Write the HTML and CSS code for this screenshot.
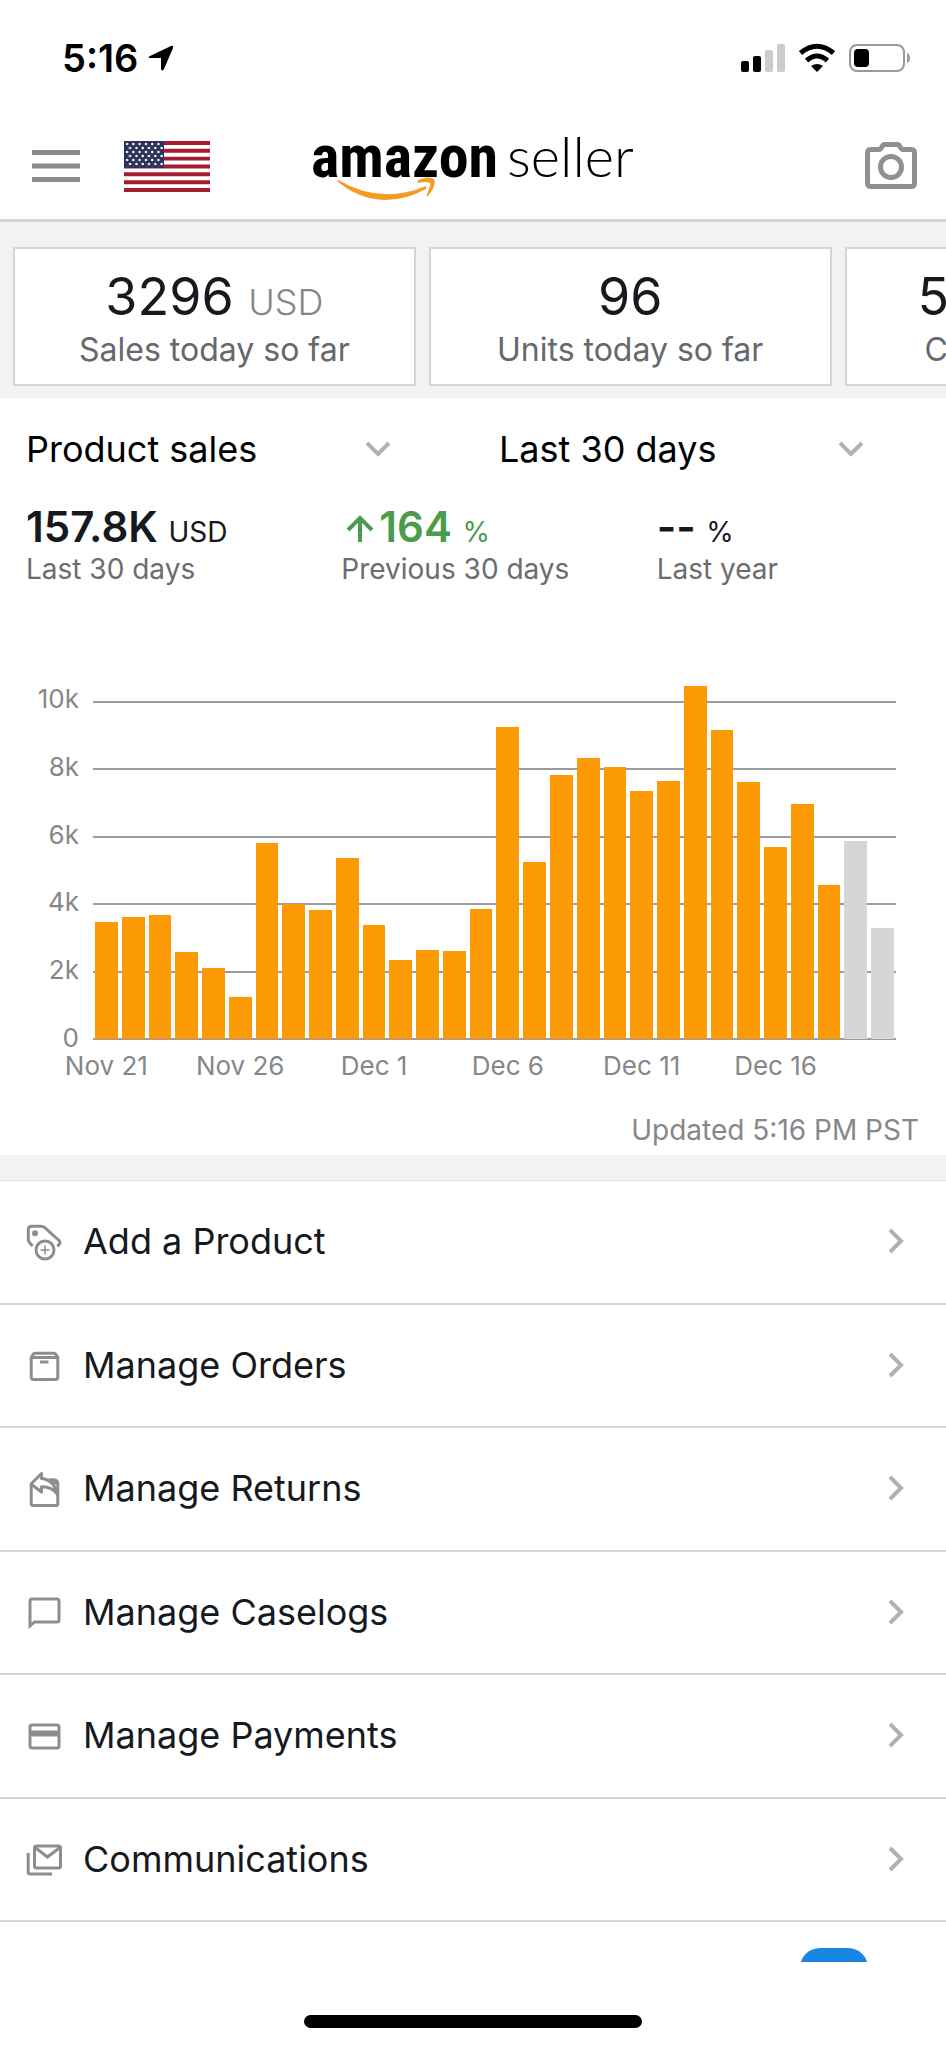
FILE: index.html
```html
<!DOCTYPE html>
<html lang="en">
<head>
  <meta charset="UTF-8">
  <meta name="viewport" content="width=device-width, initial-scale=1.0">
  <title>Amazon Seller</title>
  <link rel="stylesheet" href="styles.css">
</head>
<body>
  <div class="status-bar">
    <div class="status-time">
      <span>5:16</span>
      <svg width="26" height="26" viewBox="0 0 26 26"><path d="M2 11 L23 1 Q26 0 25 3 L16 24 Q14 27 13 24 V13 H2 Q-1 12.500 2 11Z"/></svg>
    </div>
    <div class="status-icons">
      <svg width="44" height="28" viewBox="0 0 44 28">
        <rect x="0" y="17" width="8" height="11" rx="2"/>
        <rect x="12" y="12" width="8" height="16" rx="2"/>
        <rect x="24" y="6" width="8" height="22" rx="2" fill="#ccc"/>
        <rect x="36" y="0" width="8" height="28" rx="2" fill="#ccc"/>
      </svg>
      <svg width="38" height="28" viewBox="0 0 38 28">
        <path d="M2.500 9 Q19 -4.500 35.500 9" fill="none" stroke="#000" stroke-width="5"/>
        <path d="M8.500 16.500 Q19 7.500 29.500 16.500" fill="none" stroke="#000" stroke-width="5"/>
        <path d="M13 22 Q19 18 25 22 L19 28Z"/>
      </svg>
      <svg width="62" height="28" viewBox="0 0 62 28">
        <rect x="1" y="1" width="54" height="26" rx="7" fill="none" stroke="#999" stroke-width="2"/>
        <rect x="5" y="5" width="15" height="18" rx="4"/>
        <path d="M58 9 Q61 10 61 14 T58 19Z" fill="#999"/>
      </svg>
    </div>
  </div>

  <header class="header">
    <div class="header-left">
      <button class="icon-button" aria-label="Menu">
        <svg width="48" height="32" viewBox="0 0 48 32"><path d="M0 2.500H48M0 16H48M0 29.500H48" stroke="#898b8f" stroke-width="5"/></svg>
      </button>
      <button class="icon-button" aria-label="Marketplace">
        <svg width="86" height="51" viewBox="0 0 86 51">
          <defs>
            <pattern id="stars" x="1" y="1" width="6.300" height="8" patternUnits="userSpaceOnUse">
              <circle cx="2" cy="2" r="1.200" fill="#fff"/>
              <circle cx="5.100" cy="6" r="1.200" fill="#fff"/>
            </pattern>
          </defs>
          <rect width="86" height="51" fill="#fff"/>
          <path d="M0 2H86M0 9.800H86M0 17.600H86M0 25.500H86M0 33.300H86M0 41.200H86M0 49H86" stroke="#a51c30" stroke-width="3.900"/>
          <rect width="40" height="27" fill="#2b3158"/>
          <rect x="1" y="1" width="38" height="25" fill="url(#stars)"/>
        </svg>
      </button>
    </div>
    <svg class="logo" width="328" height="74" viewBox="0 0 328 74">
      <text class="logo-amazon" x="0" y="48">amazon</text>
      <text class="logo-seller" x="196" y="48">seller</text>
      <path d="M27 51 Q70 76 115 57 Q116 58 115 60 Q95 71 74 71 Q47 70 26 52Z" fill="#f59b20"/>
      <path d="M106 52 Q116 46 123 50 Q126 56 117 67 Q115 68 116 65 Q120 56 119 54 Q116 52 107 54Z" fill="#f59b20"/>
    </svg>
    <button class="icon-button camera-button" aria-label="Camera">
      <svg width="52" height="48" viewBox="0 0 52 48" fill="none" stroke="#8e9092" stroke-width="5" stroke-linejoin="round">
        <path d="M6 7.500H13.500Q16 7.500 17 4.500Q18 2.500 20 2.500H32Q34 2.500 35 4.500Q36 7.500 38.500 7.500H46Q49.500 7.500 49.500 11V41Q49.500 44.500 46 44.500H6Q2.500 44.500 2.500 41V11Q2.500 7.500 6 7.500Z"/>
        <circle cx="26" cy="25" r="10.500"/>
      </svg>
    </button>
  </header>

  <section class="cards">
    <a class="card" href="#sales">
      <span class="card-value">3296 <small>USD</small></span>
      <span class="card-label">Sales today so far</span>
    </a>
    <a class="card" href="#units">
      <span class="card-value">96</span>
      <span class="card-label">Units today so far</span>
    </a>
    <a class="card" href="#balance">
      <span class="card-value">51.34K <small>USD</small></span>
      <span class="card-label">Current balance</span>
    </a>
  </section>

  <section class="sales">
    <div class="filters">
      <div class="filter">
        <select aria-label="Metric"><option>Product sales</option></select>
        <svg width="26" height="16" viewBox="0 0 26 16"><path d="M2 2L13 13L24 2"/></svg>
      </div>
      <div class="filter">
        <select aria-label="Date range"><option>Last 30 days</option></select>
        <svg width="26" height="16" viewBox="0 0 26 16"><path d="M2 2L13 13L24 2"/></svg>
      </div>
    </div>

    <div class="metrics">
      <div class="metric">
        <div class="metric-value">157.8K <small>USD</small></div>
        <div class="metric-label">Last 30 days</div>
      </div>
      <div class="metric">
        <div class="metric-value up"><svg width="38" height="26" viewBox="0 0 38 26"><path d="M19 26V3M7 14L19 2L31 14"/></svg>164 <small>%</small></div>
        <div class="metric-label">Previous 30 days</div>
      </div>
      <div class="metric">
        <div class="metric-value">-- <small>%</small></div>
        <div class="metric-label">Last year</div>
      </div>
    </div>

    <div class="chart">
      <div class="y-axis">
        <span>10k</span><span>8k</span><span>6k</span><span>4k</span><span>2k</span><span>0</span>
      </div>
      <div class="plot">
        <div class="grid-lines"><i></i><i></i><i></i><i></i><i></i></div>
        <div class="bars">
          <i style="height: 34.7%"></i>
          <i style="height: 36%"></i>
          <i style="height: 36.7%"></i>
          <i style="height: 25.6%"></i>
          <i style="height: 21%"></i>
          <i style="height: 12.5%"></i>
          <i style="height: 58.1%"></i>
          <i style="height: 39.9%"></i>
          <i style="height: 38.1%"></i>
          <i style="height: 53.5%"></i>
          <i style="height: 33.6%"></i>
          <i style="height: 23.3%"></i>
          <i style="height: 26.3%"></i>
          <i style="height: 25.9%"></i>
          <i style="height: 38.4%"></i>
          <i style="height: 92.3%"></i>
          <i style="height: 52.5%"></i>
          <i style="height: 78%"></i>
          <i style="height: 83%"></i>
          <i style="height: 80.6%"></i>
          <i style="height: 73.5%"></i>
          <i style="height: 76.2%"></i>
          <i style="height: 104.3%"></i>
          <i style="height: 91.5%"></i>
          <i style="height: 75.9%"></i>
          <i style="height: 56.9%"></i>
          <i style="height: 69.6%"></i>
          <i style="height: 45.5%"></i>
          <i class="pending" style="height: 58.5%"></i>
          <i class="pending" style="height: 32.9%"></i>
        </div>
      </div>
      <div class="x-axis">
        <div class="x-labels">
          <span>Nov 21</span><span>Nov 26</span><span>Dec 1</span><span>Dec 6</span><span>Dec 11</span><span>Dec 16</span>
        </div>
      </div>
    </div>
    <p class="updated">Updated 5:16 PM PST</p>
  </section>

  <nav class="menu">
    <a class="menu-item" href="#add-product">
      <svg class="menu-icon" viewBox="0 0 36 36">
        <path d="M6.500 23L3.500 19.500Q2.300 18 2.300 16.500V6.500Q2.300 3.300 5.500 3.300H15Q17 3.300 18.500 4.500L33 17.500Q34.500 19 33.500 21L31.500 23.500"/>
        <circle cx="9" cy="10.300" r="3" fill="#8b8d90" stroke="none"/>
        <circle cx="19" cy="27" r="9"/>
        <path d="M19 22.500V31.500M14.500 27H23.500" stroke-width="1.500"/>
      </svg>
      <span>Add a Product</span>
      <svg class="chevron" viewBox="0 0 16 26"><path d="M2 2L13 13L2 24"/></svg>
    </a>
    <a class="menu-item" href="#orders">
      <svg class="menu-icon" viewBox="0 0 36 36">
        <path d="M5.200 10.500V30Q5.200 32.500 7.700 32.500H29.300Q31.800 32.500 31.800 30V10.500L30 7.500Q29.300 6.200 28 6.200H9Q7.700 6.200 7 7.500ZM5.200 10.500H31.800"/>
        <path d="M14 15H22.500" stroke-width="3"/>
      </svg>
      <span>Manage Orders</span>
      <svg class="chevron" viewBox="0 0 16 26"><path d="M2 2L13 13L2 24"/></svg>
    </a>
    <a class="menu-item" href="#returns">
      <svg class="menu-icon" viewBox="0 0 36 36">
        <path d="M5.200 15V33.500Q5.200 35.500 7.200 35.500H29.800Q31.800 35.500 31.800 33.500V14Q31.800 10 28 9.700H23L31.800 14"/>
        <path d="M5 14L15.500 3.500V8.500Q28.500 10 31 24Q26 16.500 15.500 16.800V22Z" stroke-linejoin="round"/>
      </svg>
      <span>Manage Returns</span>
      <svg class="chevron" viewBox="0 0 16 26"><path d="M2 2L13 13L2 24"/></svg>
    </a>
    <a class="menu-item" href="#caselogs">
      <svg class="menu-icon" viewBox="0 0 36 36">
        <path d="M4 32V7Q4 5 6 5H31Q33 5 33 7V26Q33 28 31 28H8.500Z"/>
      </svg>
      <span>Manage Caselogs</span>
      <svg class="chevron" viewBox="0 0 16 26"><path d="M2 2L13 13L2 24"/></svg>
    </a>
    <a class="menu-item" href="#payments">
      <svg class="menu-icon" viewBox="0 0 36 36">
        <rect x="4" y="8" width="29" height="23" rx="2"/>
        <path d="M4 16.500H33" stroke-width="6"/>
      </svg>
      <span>Manage Payments</span>
      <svg class="chevron" viewBox="0 0 16 26"><path d="M2 2L13 13L2 24"/></svg>
    </a>
    <a class="menu-item" href="#communications">
      <svg class="menu-icon" viewBox="0 0 36 36">
        <rect x="8.500" y="5" width="26" height="22" rx="2"/>
        <path d="M9 6.500L21.500 16L34 6.500"/>
        <path d="M2.200 12V31Q2.200 33 4.200 33H26"/>
      </svg>
      <span>Communications</span>
      <svg class="chevron" viewBox="0 0 16 26"><path d="M2 2L13 13L2 24"/></svg>
    </a>
  </nav>

  <footer class="bottom">
    <div class="peek"><button class="chat-button" aria-label="Help"></button></div>
    <div class="home-indicator"></div>
  </footer>
</body>
</html>
```
FILE: styles.css
```css
* {
    box-sizing: border-box;
}
body {
    margin: 0;
    min-height: 100vh;
    display: flex;
    flex-direction: column;
    background-color: #fff;
    color: #16191d;
    font-family: Inter, "Liberation Sans", sans-serif;
    overflow-x: hidden;
}
svg {
    display: block;
    flex-shrink: 0;
    overflow: visible;
}
small {
    line-height: 1;
}
a {
    color: inherit;
    text-decoration: none;
}

/* status bar */
.status-bar {
    display: flex;
    justify-content: space-between;
    align-items: center;
    height: 115px;
    padding: 0 35px 0 62px;
    color: #000;
}
.status-time {
    display: flex;
    align-items: center;
    gap: 10px;
    font-size: 38px;
    font-weight: 600;
}
.status-icons {
    display: flex;
    align-items: center;
    gap: 13px;
}

/* header */
.header {
    display: grid;
    grid-template-columns: 1fr auto 1fr;
    align-items: center;
    height: 107px;
    padding: 0 29px 2px 32px;
    border-bottom: 3px solid #d3d5d7;
}
.header-left {
    display: flex;
    align-items: center;
    gap: 44px;
}
.icon-button {
    padding: 0;
    border: none;
    background: none;
    cursor: pointer;
}
.camera-button {
    justify-self: end;
}
.logo-amazon {
    font-family: "Liberation Sans Narrow", "Roboto Condensed", Lato, sans-serif;
    font-size: 60px;
    font-weight: 700;
}
.logo-seller {
    font-family: Lato, sans-serif;
    font-size: 56px;
    font-weight: 300;
}

/* cards */
.cards {
    display: flex;
    gap: 13px;
    padding: 25px 13px 12px;
    background-color: #f1f2f4;
    overflow: hidden;
}
.card {
    display: flex;
    flex-direction: column;
    align-items: center;
    flex: 0 0 calc(44% - 2px);
    height: 139px;
    padding-top: 16px;
    border: 2px solid #d3d5d8;
    background-color: #fff;
    white-space: nowrap;
}
.card-value {
    font-size: 52px;
    line-height: 64px;
}
.card-value small {
    font-size: 36px;
    font-weight: 300;
    color: #85878a;
}
.card-label {
    font-size: 32px;
    line-height: 42px;
    color: #65686c;
}

/* sales summary */
.sales {
    border-bottom: 25px solid #f1f2f4;
}
.filters {
    display: grid;
    grid-template-columns: 1fr 1fr;
    padding-top: 26px;
}
.filter {
    display: grid;
    align-items: center;
    padding-left: 26px;
    padding-right: 82px;
}
.filter select,
.filter svg {
    grid-area: 1 / 1;
}
.filter select {
    appearance: none;
    width: 100%;
    padding: 0;
    border: none;
    background: none;
    font-family: inherit;
    font-size: 36px;
    line-height: 50px;
    color: #000;
}
.filter svg {
    justify-self: end;
    pointer-events: none;
}
.filter path,
.chevron path {
    fill: none;
    stroke: #b0b1b3;
    stroke-width: 4;
}
.metrics {
    display: grid;
    grid-template-columns: 1fr 1fr 1fr;
    padding-top: 29px;
}
.metric {
    padding-left: 26px;
    white-space: nowrap;
}
.metric-value {
    font-size: 42px;
    font-weight: 600;
    line-height: 48px;
}
.metric-value small {
    font-size: 28px;
    font-weight: 400;
}
.metric-value.up {
    color: #4a9b4c;
}
.metric-value svg {
    display: inline-block;
}
.metric-value path {
    fill: none;
    stroke: #4a9b4c;
    stroke-width: 4;
}
.metric-label {
    font-size: 28px;
    line-height: 37px;
    color: #6a6d70;
}

/* bar chart */
.chart {
    display: grid;
    grid-template-columns: 79px 1fr;
    column-gap: 14px;
    padding: 113px 50px 0 0;
    font-size: 26px;
    line-height: 30px;
    color: #85878a;
}
.y-axis {
    display: flex;
    flex-direction: column;
    justify-content: space-between;
    margin: -17px 0 -13px;
    text-align: right;
}
.plot {
    display: grid;
    height: 339px;
}
.grid-lines,
.bars {
    grid-area: 1 / 1;
    display: flex;
}
.grid-lines {
    flex-direction: column;
    border-bottom: 2px solid #9a9c9e;
}
.grid-lines i {
    flex: 1;
    border-top: 2px solid #9a9c9e;
}
.bars {
    align-items: flex-end;
    gap: 4px;
    padding: 0 2px 1px;
}
.bars i {
    flex: 1;
    background-color: #fc9a06;
}
.bars .pending {
    background-color: #d5d6d7;
}
.x-axis {
    grid-column: 2;
    padding-top: 11px;
}
/* every label is centered under the first of its five bars */
.x-labels {
    display: grid;
    grid-template-columns: repeat(6, 1fr);
    margin: 0 calc(100% / 15) 0 calc(-100% / 15);
    text-align: center;
}
.updated {
    margin: 0;
    padding: 31px 27px 7px;
    font-size: 28px;
    line-height: 36px;
    text-align: right;
    color: #85878a;
}

/* menu */
.menu {
    flex: 1;
    display: flex;
    flex-direction: column;
    border-top: 1px solid #dddee0;
}
.menu-item {
    flex: 1;
    display: flex;
    align-items: center;
    gap: 21px;
    min-height: 88px;
    padding: 0 42px 1px 26px;
    border-bottom: 2px solid #d3d4d6;
    font-size: 36px;
}
.menu-item span {
    flex: 1;
}
.menu-icon {
    width: 36px;
    height: 36px;
    fill: none;
    stroke: #8b8d90;
    stroke-width: 3;
}
.chevron {
    width: 16px;
    height: 26px;
}

/* bottom of the screen */
.peek {
    display: flex;
    justify-content: flex-end;
    height: 40px;
    padding: 26px 78px 0 0;
    overflow: hidden;
}
.chat-button {
    width: 68px;
    height: 68px;
    flex-shrink: 0;
    border: none;
    border-radius: 20px;
    background-color: #1a84e2;
}
.home-indicator {
    width: 338px;
    height: 13px;
    margin: 53px auto 20px;
    border-radius: 7px;
    background-color: #000;
}
```
